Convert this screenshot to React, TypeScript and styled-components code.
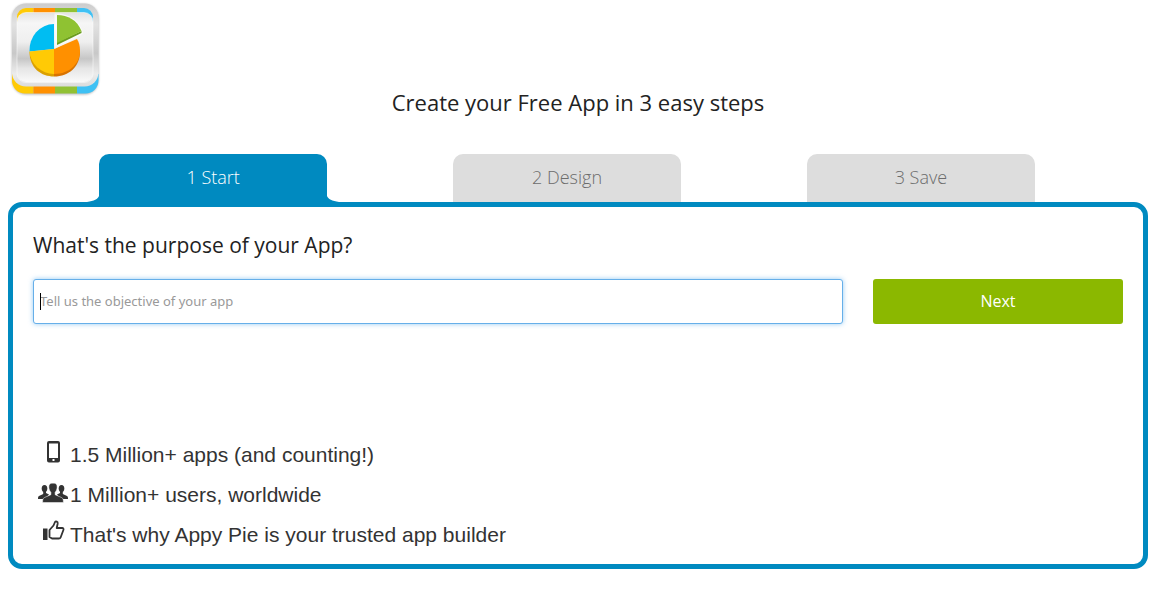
import React from "react";
import styled, { createGlobalStyle } from "styled-components";

const GlobalStyle = createGlobalStyle`
  *, *::before, *::after { box-sizing: border-box; }
  body {
    margin: 0;
    background: #fff;
    color: #222;
    font-family: "Open Sans", "Noto Sans", sans-serif;
  }
`;

const Page = styled.div`
  padding: 0 19px 29px 8px;
`;

const LogoLink = styled.a`
  display: block;
  width: 94px;
  height: 98px;
  svg { display: block; }
`;

const Title = styled.h1`
  margin: -12px 0 0;
  font-size: 22px;
  font-weight: 400;
  line-height: 32px;
  text-align: center;
`;

const Steps = styled.ol`
  display: flex;
  gap: 12%;
  margin: 36px 0 0;
  padding: 0 0 0 8%;
  list-style: none;
`;

const Step = styled.li`
  position: relative;
  flex: 0 0 228px;
`;

const StepButton = styled.button<{ $active?: boolean }>`
  display: block;
  width: 100%;
  height: 48px;
  padding: 0 0 2px;
  border: 0;
  border-radius: 10px 10px 0 0;
  background: ${(p) => (p.$active ? "#008ac0" : "#ddd")};
  color: ${(p) => (p.$active ? "#fff" : "#6c6c6c")};
  font: 300 18px/46px "Open Sans", "Noto Sans", sans-serif;
`;

const Flare = styled.svg<{ $right?: boolean }>`
  position: absolute;
  bottom: 0;
  ${(p) => (p.$right ? "left: 100%; transform: scaleX(-1);" : "right: 100%;")}
`;

const Panel = styled.main`
  padding: 20px;
  border: 5px solid #008ac0;
  border-radius: 14px;
`;

const Question = styled.label`
  display: block;
  margin-bottom: 15px;
  font-size: 21px;
  line-height: 37px;
`;

const FormRow = styled.form`
  display: flex;
  gap: 30px;
`;

const Field = styled.div`
  position: relative;
  flex: 1;
`;

const Caret = styled.span`
  position: absolute;
  left: 7px;
  top: 14px;
  width: 1px;
  height: 17px;
  background: #000;
`;

const TextInput = styled.input`
  display: block;
  width: 100%;
  height: 45px;
  padding: 0 6px 2px;
  border: 1px solid #66afe9;
  border-radius: 3px;
  outline: 0;
  box-shadow: 0 0 5px rgba(82, 168, 236, 0.6);
  font: 400 13px "Noto Sans", sans-serif;
  caret-color: transparent;
  &::placeholder { color: #999; opacity: 1; }
`;

const NextButton = styled.button`
  flex: 0 0 250px;
  height: 45px;
  padding: 0 0 2px;
  border: 0;
  border-radius: 3px;
  background: #8bb800;
  color: #fff;
  font: 400 16px "Open Sans", "Noto Sans", sans-serif;
`;

const Facts = styled.ul`
  margin: 111px 0 0;
  padding: 0;
  list-style: none;
`;

const Fact = styled.li`
  display: flex;
  height: 40px;
  color: #333;
  font: 400 21px/40px "Liberation Sans", Arial, sans-serif;
  svg { flex: none; margin: 1px 0 0 3px; }
  &:last-child { height: 29px; }
`;

const Logo = () => (
  <svg width="94" height="98" viewBox="8 0 94 98" role="img" aria-label="Appy Pie">
    <defs>
      <linearGradient id="metal" x1="0" y1="0" x2="0" y2="1">
        <stop offset="0" stopColor="#cccccc" />
        <stop offset=".25" stopColor="#e2e2e2" />
        <stop offset=".6" stopColor="#c8c8c8" />
        <stop offset=".85" stopColor="#ececec" />
        <stop offset="1" stopColor="#dcdcdc" />
      </linearGradient>
      <linearGradient id="plate" x1="0" y1="0" x2="0" y2="1">
        <stop offset="0" stopColor="#e2e2e2" />
        <stop offset=".15" stopColor="#f6f6f6" />
        <stop offset=".42" stopColor="#efefef" />
        <stop offset=".66" stopColor="#c6c6c6" />
        <stop offset=".8" stopColor="#e6e6e6" />
        <stop offset="1" stopColor="#fafafa" />
      </linearGradient>
      <clipPath id="base"><rect x="12" y="50" width="86.500" height="43.500" rx="13" /></clipPath>
      <clipPath id="inner"><rect x="17" y="8" width="76" height="74" rx="9" /></clipPath>
      <filter id="drop" x="-10%" y="-10%" width="120%" height="120%"><feGaussianBlur stdDeviation="1" /></filter>
    </defs>
    <rect x="12" y="4" width="86.500" height="90.500" rx="14" fill="#888" opacity=".6" filter="url(#drop)" />
    <g clipPath="url(#base)">
      <path fill="#ffca05" d="M12 74h21.500v20H12z" />
      <path fill="#ff9000" d="M33.500 74H55v20H33.500z" />
      <path fill="#91c135" d="M55 74h22v20H55z" />
      <path fill="#3fc1f4" d="M77 74h22v20H77z" />
    </g>
    <rect x="12" y="3.500" width="86.500" height="83" rx="14" fill="url(#metal)" />
    <g clipPath="url(#inner)">
      <path fill="#ffca05" d="M17 8h16.500v14H17z" />
      <path fill="#ff9000" d="M33.500 8H55v14H33.500z" />
      <path fill="#91c135" d="M55 8h22v14H55z" />
      <path fill="#3fc1f4" d="M77 8h16v14H77z" />
      <rect x="17" y="12.500" width="76" height="70" rx="9" fill="url(#plate)" />
    </g>
    <rect x="17" y="12.500" width="76" height="70" rx="9" fill="none" stroke="#fff" strokeWidth="1" opacity=".5" />
    <path fill="#dba000" d="M29.500 51.500c0 17 12 25 24.500 25V70Z" />
    <path fill="#d97300" d="M54 76.500c15 0 26-10 26-25l-2-6-24 28Z" />
    <path fill="#00bdf2" d="M54 49V24A25 26 0 0 0 29.500 51.500Z" />
    <path fill="#ffca05" d="M54 49l-24.500 2.500A25 24 0 0 0 54 74Z" />
    <path fill="#ff9000" d="M54 49v25c16 0 26-11 26-23 0-5-1-9-3-12Z" />
    <path fill="#fff" d="M54.500 48V13.500c13-1 26 7 28.500 20L76.500 38 54.500 49Z" opacity=".65" />
    <path fill="#6b9c20" d="M57 42v3l24.500-12v-2Z" />
    <path fill="#8fc232" d="M57 15v28l24.500-12C77 20 68 15 57 15Z" />
  </svg>
);

const PhoneIcon = () => (
  <svg width="34" height="36" viewBox="36 436 34 36" aria-hidden="true">
    <path fill="#333" fillRule="evenodd" d="M49 441h9a2 2 0 0 1 2 2v17.500a2 2 0 0 1-2 2h-9a2 2 0 0 1-2-2V443a2 2 0 0 1 2-2Zm0 2.500v14.500h9v-14.500Zm3.500 15.500v2h2v-2Z" />
  </svg>
);

const UsersIcon = () => (
  <svg width="34" height="36" viewBox="36 476 34 36" aria-hidden="true">
    <g fill="#333">
      <ellipse cx="44.500" cy="488.500" rx="2.800" ry="3.600" />
      <ellipse cx="61.500" cy="488.500" rx="2.800" ry="3.600" />
      <path d="M43.200 491v3l-4.200 2c-1 .6-1 1.500-1 3h9v-2l2-2.500-3-1.500v-2ZM62.800 491v3l4.200 2c1 .6 1 1.500 1 3h-9v-2l-2-2.500 3-1.500v-2Z" />
      <path stroke="#fff" strokeWidth=".5" d="M53 483c-3.200 0-4.400 1.800-4.100 4.500.2 2 .8 3.600 2 4.700v2.500l-6.400 2.800c-1.600.8-1.900 2-1.900 5h20.800c0-3-.3-4.200-1.900-5l-6.400-2.800v-2.500c1.200-1.100 1.800-2.700 2-4.700.3-2.700-.9-4.500-4.100-4.500Z" />
    </g>
  </svg>
);

const ThumbIcon = () => (
  <svg width="34" height="36" viewBox="36 516 34 36" aria-hidden="true">
    <path fill="#333" d="M43 528.500h4.500V540H43z" />
    <path fill="none" stroke="#333" strokeWidth="1.800" strokeLinejoin="round" d="M49.500 530l4-4.500 1.500-3.500c.8-1 3-.4 2.700 1.500l-1 4.500h5.500c1.200 0 1.600 1 1.200 2l-2.800 7.500c-.3.800-1 1-1.800 1H52l-2.500-1.500Z" />
  </svg>
);

const App = () => (
  <>
    <GlobalStyle />
    <Page>
      <LogoLink href="#"><Logo /></LogoLink>
      <Title>Create your Free App in 3 easy steps</Title>
      <Steps>
        <Step>
          <StepButton type="button" $active aria-current="step">1 Start</StepButton>
          <Flare width="12" height="6" aria-hidden="true"><path fill="#008ac0" d="M12 0v6H0C7 5 11 3 12 0Z" /></Flare>
          <Flare $right width="12" height="6" aria-hidden="true"><path fill="#008ac0" d="M12 0v6H0C7 5 11 3 12 0Z" /></Flare>
        </Step>
        <Step><StepButton type="button">2 Design</StepButton></Step>
        <Step><StepButton type="button">3 Save</StepButton></Step>
      </Steps>
      <Panel>
        <Question htmlFor="purpose">What's the purpose of your App?</Question>
        <FormRow onSubmit={(e) => e.preventDefault()}>
          <Field>
            <TextInput id="purpose" type="text" placeholder="Tell us the objective of your app" />
            <Caret />
          </Field>
          <NextButton type="submit">Next</NextButton>
        </FormRow>
        <Facts>
          <Fact><PhoneIcon />1.5 Million+ apps (and counting!)</Fact>
          <Fact><UsersIcon />1 Million+ users, worldwide</Fact>
          <Fact><ThumbIcon />That's why Appy Pie is your trusted app builder</Fact>
        </Facts>
      </Panel>
    </Page>
  </>
);

export default App;
